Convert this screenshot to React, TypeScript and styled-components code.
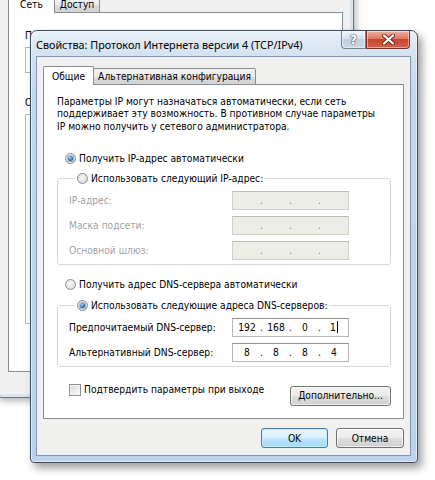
import React from 'react';
import styled, { createGlobalStyle } from 'styled-components';

const GlobalStyle = createGlobalStyle`
  html, body {
    margin: 0;
    padding: 0;
    background: #ffffff;
  }
  body {
    font-family: "DejaVu Sans Condensed", "DejaVu Sans", sans-serif;
    font-size: 10.2px;
    color: #000;
  }
  * {
    box-sizing: border-box;
  }
`;

const Desktop = styled.div`
  position: relative;
  width: 435px;
  height: 480px;
  overflow: hidden;
  background: #fff;
`;

/* ---------- back window (network adapter properties) ---------- */

const BackWindow = styled.div`
  position: absolute;
  left: -4px;
  top: -40px;
  width: 358px;
  height: 438px;
  padding: 0 3px 3px 3px;
  display: flex;
  flex-direction: column;
  background: #d9e4ef;
  border: 1px solid #66768a;
  border-radius: 6px;
  box-shadow: 2px 3px 7px rgba(0, 0, 0, 0.3);
`;

const BackClient = styled.div`
  flex: 1;
  display: flex;
  flex-direction: column;
  padding: 33px 7px 22px 8px;
  background: #f0f0f0;
`;

const BackPanel = styled.div`
  flex: 1;
  display: flex;
  flex-direction: column;
  gap: 6px;
  padding: 17px 12px 13px 16px;
  background: #fff;
  border: 1px solid #898c95;
`;

const BackBox = styled.div<{ $h: number }>`
  height: ${p => p.$h}px;
  border: 1px solid #b5b8bf;
  background: #fff;
`;

/* ---------- tabs ---------- */

const TabStrip = styled.div`
  display: flex;
  align-items: flex-end;
  height: 19px;
  margin-bottom: -1px;
  position: relative;
  z-index: 1;
`;

const Tab = styled.div<{ $active?: boolean; $px: number }>`
  height: ${p => (p.$active ? 19 : 17)}px;
  display: flex;
  align-items: center;
  padding: 0 ${p => p.$px}px;
  margin-left: ${p => (p.$active ? 0 : -1)}px;
  border: 1px solid #898c95;
  border-bottom: ${p => (p.$active ? 'none' : '1px solid #898c95')};
  border-radius: 2px 2px 0 0;
  background: ${p =>
    p.$active
      ? '#ffffff'
      : 'linear-gradient(#f3f3f3, #ececec 50%, #dedede 51%, #d2d2d2)'};
  white-space: nowrap;
`;

/* ---------- front dialog ---------- */

const Dialog = styled.div`
  position: absolute;
  left: 30px;
  top: 30px;
  width: 388px;
  height: 433px;
  padding: 0 6px 6px 5px;
  display: flex;
  flex-direction: column;
  border: 1px solid #3c4d63;
  border-radius: 7px 7px 4px 4px;
  background: linear-gradient(#eaf1f9 0px, #d3e1f1 24px, #c2d6ec 60px, #bdd2ea 100%);
  box-shadow: 4px 5px 9px rgba(0, 0, 0, 0.38), inset 0 0 0 1px rgba(255, 255, 255, 0.55);
`;

const TitleBar = styled.div`
  height: 25px;
  display: flex;
  align-items: flex-start;
`;

const Title = styled.div`
  flex: 1;
  padding-top: 6px;
  font-family: "Noto Sans", "Open Sans", sans-serif;
  font-size: 10.8px;
  line-height: 15px;
  white-space: nowrap;
  color: #000;
`;

const CaptionButton = styled.div<{ $close?: boolean }>`
  width: ${p => (p.$close ? 44 : 25)}px;
  height: 18px;
  display: flex;
  align-items: center;
  justify-content: center;
  border: 1px solid ${p => (p.$close ? '#7b3025' : '#6f829b')};
  border-top: none;
  margin-right: ${p => (p.$close ? 1 : 0)}px;
  border-radius: ${p => (p.$close ? '0 0 4px 0' : '0 0 0 4px')};
  background: ${p =>
    p.$close
      ? 'linear-gradient(#eab1a4, #dc7a66 45%, #c9462d 50%, #d2614a 100%)'
      : 'linear-gradient(#eef3f9, #d9e3ee 45%, #c3d0df 50%, #cbd7e4 100%)'};
  box-shadow: inset 0 0 0 1px rgba(255, 255, 255, 0.45);
`;

const HelpGlyph = styled.span`
  font-family: "DejaVu Sans", sans-serif;
  font-weight: bold;
  font-size: 12px;
  color: #fff;
  text-shadow: 0 0 1px #46566b, 0 0 1px #46566b, 0 0 2px #46566b;
`;

const Client = styled.div`
  flex: 1;
  display: flex;
  flex-direction: column;
  padding: 9px 6px 7px 6px;
  background: #f0f0ee;
  border: 1px solid #8297b1;
`;

const Panel = styled.div`
  flex: 1;
  display: flex;
  flex-direction: column;
  padding: 11px 12px 0 13px;
  background: #fff;
  border: 1px solid #898c95;
`;

const Para = styled.p`
  margin: 0;
  line-height: 12.3px;
  white-space: nowrap;
`;

const RadioRow = styled.label<{ $mt: number }>`
  display: flex;
  align-items: center;
  gap: 3px;
  height: 14px;
  margin: ${p => p.$mt}px 0 0 8px;
  white-space: nowrap;
`;

const Radio = styled.span<{ $on?: boolean }>`
  width: 11px;
  height: 11px;
  flex: none;
  display: flex;
  align-items: center;
  justify-content: center;
  border-radius: 50%;
  border: 1px solid #8a8c90;
  background: radial-gradient(circle at 45% 40%, #fbfbfb, #dcdcdc 70%, #cfcfcf);

  &::after {
    content: '';
    display: ${p => (p.$on ? 'block' : 'none')};
    width: 5px;
    height: 5px;
    border-radius: 50%;
    background: radial-gradient(circle at 40% 35%, #a8def7, #2a74b4 55%, #123f70);
    box-shadow: 0 0 0 1px rgba(30, 70, 120, 0.35);
  }
`;

const Group = styled.fieldset<{ $mt: number }>`
  width: 100%;
  margin: ${p => p.$mt}px 0 0 0;
  padding: 5px 0 4px 11px;
  border: 1px solid #d5d9de;
  border-radius: 3px;
  min-width: 0;
`;

const Legend = styled.legend`
  margin-left: 6px;
  padding: 0 2px;
`;

const LegendRadio = styled.span`
  display: flex;
  align-items: center;
  gap: 3px;
  height: 14px;
  white-space: nowrap;
`;

const FieldGrid = styled.div`
  display: grid;
  grid-template-columns: 163px 117px;
  row-gap: 6px;
  align-items: center;
`;

const FieldLabel = styled.span<{ $disabled?: boolean }>`
  color: ${p => (p.$disabled ? '#a2a2a2' : '#000')};
  white-space: nowrap;
`;

const IpBox = styled.div<{ $disabled?: boolean }>`
  height: 19px;
  display: flex;
  align-items: center;
  padding-left: 3px;
  border: 1px solid ${p => (p.$disabled ? '#cfcfc9' : '#b4b6bc')};
  border-top-color: ${p => (p.$disabled ? '#bdbdb7' : '#8f9197')};
  background: ${p => (p.$disabled ? '#ededE7' : '#fff')};
  color: ${p => (p.$disabled ? '#7c7c7c' : '#000')};
`;

const Octet = styled.span`
  width: 22px;
  text-align: center;
`;

const Dot = styled.span`
  width: 7px;
  text-align: center;
`;

const Caret = styled.span`
  display: inline-block;
  width: 1px;
  height: 12px;
  margin-left: 1px;
  vertical-align: -2px;
  background: #000;
`;

const CheckRow = styled.div`
  display: flex;
  justify-content: space-between;
  align-items: flex-start;
  margin-top: 16px;
  padding-left: 12px;
`;

const CheckLabel = styled.label`
  display: flex;
  align-items: center;
  gap: 3px;
  height: 14px;
  white-space: nowrap;
`;

const CheckBox = styled.span`
  width: 12px;
  height: 12px;
  flex: none;
  border: 1px solid #8f8f8f;
  background: linear-gradient(135deg, #d6d6d6, #eeeeee 60%, #fafafa);
  box-shadow: inset 0 0 0 1px #f4f4f4;
`;

const Button = styled.button<{ $w: number; $default?: boolean; $mt?: number }>`
  width: ${p => p.$w}px;
  height: 20px;
  margin-top: ${p => p.$mt ?? 0}px;
  padding: 0;
  font: inherit;
  color: #000;
  border: 1px solid ${p => (p.$default ? '#3c7fb1' : '#707070')};
  border-radius: 3px;
  background: ${p =>
    p.$default
      ? 'linear-gradient(#eaf6fd, #d9f0fc 50%, #bee6fd 51%, #a7d9f5)'
      : 'linear-gradient(#f2f2f2, #ebebeb 50%, #dddddd 51%, #cfcfcf)'};
  box-shadow: inset 0 0 0 1px ${p => (p.$default ? 'rgba(200, 235, 255, 0.9)' : 'rgba(255, 255, 255, 0.7)')};
`;

const ButtonRow = styled.div`
  display: flex;
  justify-content: flex-end;
  gap: 8px;
  margin-top: 9px;
`;

const CloseIcon = () => (
  <svg width="13" height="11" viewBox="0 0 13 11">
    <path d="M2 1.5 L11 9.5 M11 1.5 L2 9.5" stroke="#6e2418" strokeWidth="4" strokeLinecap="round" />
    <path d="M2 1.5 L11 9.5 M11 1.5 L2 9.5" stroke="#ffffff" strokeWidth="2.2" strokeLinecap="round" />
  </svg>
);

const IpField: React.FC<{ parts: string[]; disabled?: boolean; caret?: boolean }> = ({ parts, disabled, caret }) => (
  <IpBox $disabled={disabled}>
    {parts.map((p, i) => (
      <React.Fragment key={i}>
        {i > 0 && <Dot>.</Dot>}
        <Octet>
          {p}
          {caret && i === 3 && <Caret />}
        </Octet>
      </React.Fragment>
    ))}
  </IpBox>
);

const App: React.FC = () => {
  const empty = ['', '', '', ''];
  return (
    <Desktop>
      <GlobalStyle />

      <BackWindow>
        <BackClient>
          <TabStrip>
            <Tab $active $px={11}>
              Сеть
            </Tab>
            <Tab $px={5}>Доступ</Tab>
          </TabStrip>
          <BackPanel>
            <span>Подключение через:</span>
            <BackBox $h={26} />
            <span style={{ marginTop: 18 }}>Отмеченные компоненты используются этим подключением:</span>
            <BackBox $h={210} />
          </BackPanel>
        </BackClient>
      </BackWindow>

      <Dialog>
        <TitleBar>
          <Title>Свойства: Протокол Интернета версии 4 (TCP/IPv4)</Title>
          <CaptionButton>
            <HelpGlyph>?</HelpGlyph>
          </CaptionButton>
          <CaptionButton $close>
            <CloseIcon />
          </CaptionButton>
        </TitleBar>

        <Client>
          <TabStrip>
            <Tab $active $px={8}>
              Общие
            </Tab>
            <Tab $px={4}>Альтернативная конфигурация</Tab>
          </TabStrip>

          <Panel>
            <Para>
              Параметры IP могут назначаться автоматически, если сеть
              <br />
              поддерживает эту возможность. В противном случае параметры
              <br />
              IP можно получить у сетевого администратора.
            </Para>

            <RadioRow $mt={19}>
              <Radio $on />
              Получить IP-адрес автоматически
            </RadioRow>

            <Group $mt={6}>
              <Legend>
                <LegendRadio>
                  <Radio />
                  Использовать следующий IP-адрес:
                </LegendRadio>
              </Legend>
              <FieldGrid>
                <FieldLabel $disabled>IP-адрес:</FieldLabel>
                <IpField parts={empty} disabled />
                <FieldLabel $disabled>Маска подсети:</FieldLabel>
                <IpField parts={empty} disabled />
                <FieldLabel $disabled>Основной шлюз:</FieldLabel>
                <IpField parts={empty} disabled />
              </FieldGrid>
            </Group>

            <RadioRow $mt={13}>
              <Radio />
              Получить адрес DNS-сервера автоматически
            </RadioRow>

            <Group $mt={7}>
              <Legend>
                <LegendRadio>
                  <Radio $on />
                  Использовать следующие адреса DNS-серверов:
                </LegendRadio>
              </Legend>
              <FieldGrid>
                <FieldLabel>Предпочитаемый DNS-сервер:</FieldLabel>
                <IpField parts={['192', '168', '0', '1']} caret />
                <FieldLabel>Альтернативный DNS-сервер:</FieldLabel>
                <IpField parts={['8', '8', '8', '4']} />
              </FieldGrid>
            </Group>

            <CheckRow>
              <CheckLabel>
                <CheckBox />
                Подтвердить параметры при выходе
              </CheckLabel>
              <Button $w={101} $mt={3}>
                Дополнительно...
              </Button>
            </CheckRow>
          </Panel>

          <ButtonRow>
            <Button $w={67} $default>
              OK
            </Button>
            <Button $w={68}>Отмена</Button>
          </ButtonRow>
        </Client>
      </Dialog>
    </Desktop>
  );
};

export default App;
